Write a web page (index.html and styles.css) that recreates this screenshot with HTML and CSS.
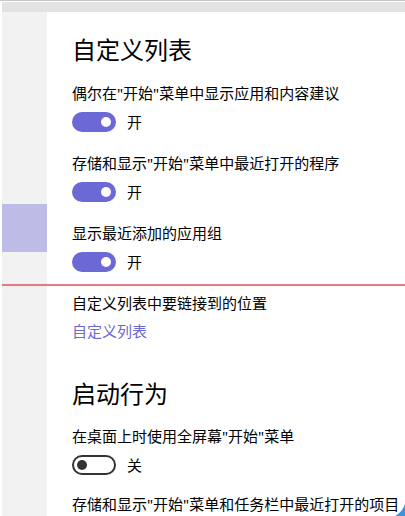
FILE: index.html
```html
<!DOCTYPE html>
<html lang="zh-CN">
<head>
<meta charset="utf-8">
<title>开始</title>
<link rel="stylesheet" href="styles.css">
</head>
<body>
<div class="window">
  <div class="topline"></div>
  <div class="frame">
    <div class="band"></div>
    <div class="body">
      <aside class="sidebar">
        <div class="nav-selected"></div>
      </aside>
      <main class="content">
        <h2 class="heading">自定义列表</h2>
        <div class="setting">
          <div class="label">偶尔在"开始"菜单中显示应用和内容建议</div>
          <div class="toggle-row"><span class="toggle on"><span class="knob"></span></span><span class="state">开</span></div>
        </div>
        <div class="setting">
          <div class="label">存储和显示"开始"菜单中最近打开的程序</div>
          <div class="toggle-row"><span class="toggle on"><span class="knob"></span></span><span class="state">开</span></div>
        </div>
        <div class="setting">
          <div class="label">显示最近添加的应用组</div>
          <div class="toggle-row"><span class="toggle on"><span class="knob"></span></span><span class="state">开</span></div>
        </div>
        <div class="setting">
          <div class="label">自定义列表中要链接到的位置</div>
          <a class="link" href="#">自定义列表</a>
        </div>
        <h2 class="heading heading-second">启动行为</h2>
        <div class="setting setting-tight">
          <div class="label">在桌面上时使用全屏幕"开始"菜单</div>
          <div class="toggle-row"><span class="toggle off"><span class="knob"></span></span><span class="state">关</span></div>
        </div>
        <div class="setting">
          <div class="label label-nowrap">存储和显示"开始"菜单和任务栏中最近打开的项目</div>
        </div>
      </main>
    </div>
  </div>
  <div class="redline"></div>
  <svg class="corner" width="10" height="14" viewBox="0 0 10 14"><path d="M0 14 C4 12 8 8 10 2 L10 14 Z" fill="#3d93dc"/></svg>
</div>
</body>
</html>
```

FILE: styles.css
```css
html, body {
  margin: 0;
  padding: 0;
  background: #ffffff;
}
body {
  font-family: "Noto Sans", "Noto Sans CJK SC", sans-serif;
  color: #000;
}
.window {
  position: relative;
  width: 405px;
  height: 516px;
  overflow: hidden;
  display: flex;
  flex-direction: column;
}
.topline {
  height: 1px;
  background: #c8c8c8;
  flex: none;
}
.frame {
  flex: 1;
  margin-top: 1px;
  padding-left: 2px;
  display: flex;
  flex-direction: column;
}
.band {
  height: 10px;
  background: #e3e3e3;
  flex: none;
}
.body {
  flex: 1;
  display: flex;
}
.sidebar {
  width: 45px;
  flex: none;
  background: #f2f2f2;
}
.nav-selected {
  margin-top: 192px;
  height: 48px;
  background: #bcbce6;
}
.content {
  flex: 1;
  padding: 22px 0 0 25px;
  white-space: nowrap;
}
.heading {
  margin: 0 0 17px 0;
  font-size: 24px;
  font-weight: 400;
  line-height: 32px;
}
.heading-second {
  margin-top: 37px;
  margin-bottom: 16px;
}
.setting {
  margin-bottom: 21px;
}
.setting-tight {
  margin-bottom: 19px;
}
.label {
  font-size: 15px;
  line-height: 20px;
  margin-bottom: 9px;
}
.label-nowrap {
  white-space: nowrap;
}
.link {
  display: block;
  font-size: 15px;
  line-height: 20px;
  color: #6b69d0;
  text-decoration: none;
  margin-top: -1px;
}
.toggle-row {
  display: flex;
  align-items: center;
  height: 20px;
}
.toggle {
  box-sizing: border-box;
  width: 44px;
  height: 20px;
  border-radius: 10px;
  display: flex;
  align-items: center;
  flex: none;
}
.toggle.on {
  background: #6b69d6;
  justify-content: flex-end;
  padding-right: 5px;
}
.toggle.off {
  border: 2px solid #333333;
  background: #fff;
  justify-content: flex-start;
  padding-left: 3px;
}
.knob {
  width: 10px;
  height: 10px;
  border-radius: 50%;
}
.toggle.on .knob {
  background: #ffffff;
}
.toggle.off .knob {
  background: #333333;
}
.state {
  font-size: 15px;
  line-height: 20px;
  margin-left: 11px;
}
.redline {
  position: absolute;
  left: 2px;
  right: 0;
  top: 284px;
  height: 2px;
  background: #dc7f85;
  box-shadow: 0 0 1px #f3c9cc;
}
.corner {
  position: absolute;
  right: 0;
  bottom: 0;
}
```
